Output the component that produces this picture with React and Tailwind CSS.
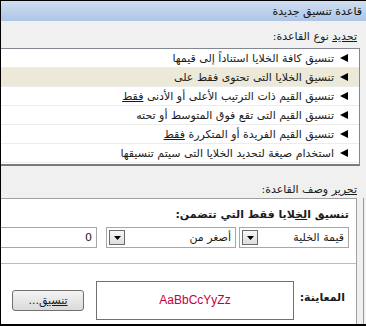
const rules = [
  { text: "تنسيق كافة الخلايا استناداً إلى قيمها" },
  { text: "تنسيق الخلايا التى تحتوى فقط على", selected: true },
  { text: "تنسيق القيم ذات الترتيب الأعلى أو الأدنى", tail: "فقط" },
  { text: "تنسيق القيم التى تقع فوق المتوسط أو تحته" },
  { text: "تنسيق القيم الفريدة أو المتكررة", tail: "فقط" },
  { text: "استخدام صيغة لتحديد الخلايا التى سيتم تنسيقها" },
];

const Arrow = () => (
  <svg width="8" height="8" viewBox="0 0 8 8" className="shrink-0">
    <polygon points="0,4 8,0 8,8" fill="#000" />
  </svg>
);

const DropButton = () => (
  <div className="w-[16px] h-[15px] border border-[#6b6b6b] bg-linear-to-b from-[#f6f6f6] to-[#dedede] flex items-center justify-center shrink-0">
    <svg width="7" height="4" viewBox="0 0 7 4">
      <polygon points="0,0 7,0 3.5,4" fill="#000" />
    </svg>
  </div>
);

const Combo = ({ label, width }) => (
  <div
    className={`${width} h-[21px] border border-[#a7a7a7] bg-white flex items-center justify-between pr-[4px] pl-[2px] shrink-0`}
  >
    <span className="whitespace-nowrap">{label}</span>
    <DropButton />
  </div>
);

export default function App() {
  return (
    <div
      dir="rtl"
      className="w-[366px] h-[326px] overflow-hidden bg-[#f0f0f0] border-t border-l border-b-2 border-black flex flex-col text-[11px] leading-[13px] text-[#1b1b1b] font-['DejaVu_Sans',sans-serif]"
    >
      {/* title bar */}
      <div className="h-[20px] shrink-0 flex items-center pr-[4px] bg-linear-to-b from-[#d0dff2] to-[#adc5e5] text-[#111]">
        قاعدة تنسيق جديدة
      </div>

      <div className="h-[27px] shrink-0 flex items-center pt-[3px] pr-[9px]">
        <span>
          <span className="underline">تحديد</span> نوع القاعدة:
        </span>
      </div>

      {/* rule type list */}
      <div className="mr-[6px] -ml-[2px] shrink-0 bg-white border border-[#828790] border-b-2 border-b-[#7a7a7a] pb-[1px]">
        {rules.map((r, i) => (
          <div
            key={i}
            className={`h-[19px] flex items-center gap-[6px] pr-[11px] border-b border-[#ececec] ${
              r.selected ? "bg-[#ece9d8]" : ""
            }`}
          >
            <Arrow />
            <span className="whitespace-nowrap">
              {r.text}
              {r.tail && (
                <>
                  {" "}
                  <span className="underline">{r.tail}</span>
                </>
              )}
            </span>
          </div>
        ))}
      </div>

      <div className="h-[32px] shrink-0 flex items-end pb-[2px] pr-[9px]">
        <span>
          <span className="underline">تحرير</span> وصف القاعدة:
        </span>
      </div>

      {/* rule description */}
      <div className="flex-1 flex">
        <div className="w-[2px] shrink-0" />
        <div className="w-px shrink-0 bg-[#9a9a9a]" />
        <div className="w-[6px] shrink-0" />
        <div className="flex-1 -ml-[2px] bg-white border-t border-r border-[#a0a0a0] flex flex-col">
          <div className="mt-[9px] pr-[7px] font-bold whitespace-nowrap">
            تنسيق ا<span className="underline">لخ</span>لايا فقط التي تتضمن:
          </div>

          <div className="mt-[6px] pr-[7px] flex items-center">
            <Combo label="قيمة الخلية" width="w-[110px]" />
            <div className="w-[3px] shrink-0" />
            <Combo label="أصغر من" width="w-[130px]" />
            <div className="w-[9px] shrink-0" />
            <div className="flex-1 h-[21px] border border-[#a7a7a7] bg-white flex items-center pr-[4px]">
              0
            </div>
          </div>

          <div className="mt-[15px] h-px bg-[#9cc2ee]" />

          <div className="mt-[17px] pr-[11px] flex items-center">
            <div className="w-[51px] shrink-0 font-bold mb-[6px]">المعاينة:</div>
            <div className="w-[198px] h-[39px] shrink-0 border border-[#707070] flex items-center justify-center">
              <span className="text-[12px] text-[#c8003a] font-['Liberation_Sans',sans-serif]">
                AaBbCcYyZz
              </span>
            </div>
            <div className="w-[12px] shrink-0" />
            <button className="w-[72px] h-[21px] shrink-0 rounded-[3px] border border-[#707070] bg-linear-to-b from-[#f4f4f4] to-[#dadada] text-[11px] flex items-center justify-center">
              <span className="underline">تنسيق</span>...
            </button>
          </div>
        </div>
      </div>
    </div>
  );
}
